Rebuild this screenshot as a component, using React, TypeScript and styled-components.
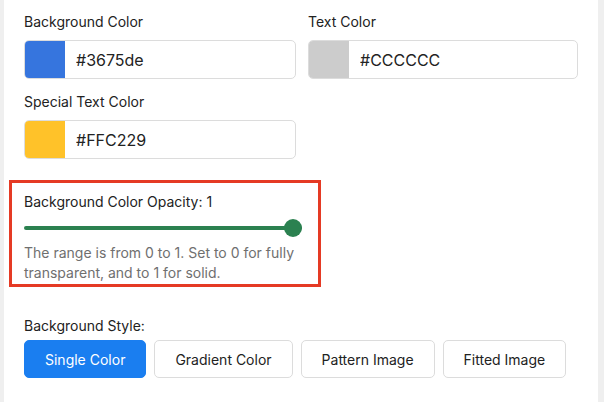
import React, { useState } from 'react';
import styled, { createGlobalStyle } from 'styled-components';

const GlobalStyle = createGlobalStyle`
  html, body {
    margin: 0;
    padding: 0;
    background: #efefef;
  }
  body {
    font-family: Inter, "Noto Sans", "Liberation Sans", sans-serif;
    color: #222;
    -webkit-font-smoothing: antialiased;
  }
`;

const Panel = styled.div`
  margin: 0 6px 0 4px;
  min-height: 402px;
  background: #fff;
  padding: 12px 14px 0 20px;
  box-sizing: border-box;
`;

const ColorGrid = styled.div`
  display: grid;
  grid-template-columns: 272px 270px;
  column-gap: 12px;
  row-gap: 13px;
`;

const Field = styled.div`
  display: flex;
  flex-direction: column;
`;

const Label = styled.label<{ $gap?: number }>`
  font-size: 14px;
  line-height: 20px;
  color: #222;
  margin-bottom: ${p => p.$gap ?? 8}px;
`;

const ColorInput = styled.div`
  display: flex;
  height: 39px;
  box-sizing: border-box;
  border: 1px solid #dcdcdc;
  border-radius: 5px;
  overflow: hidden;
`;

const Swatch = styled.div<{ $color: string }>`
  width: 40px;
  flex: none;
  background: ${p => p.$color};
`;

const HexText = styled.input`
  flex: 1;
  min-width: 0;
  border: none;
  outline: none;
  padding: 0 11px;
  font-family: inherit;
  font-size: 16px;
  color: #222;
  background: transparent;
`;

const Highlight = styled.div`
  margin: 21px 0 0 -15px;
  width: 312px;
  box-sizing: border-box;
  border: 3px solid #e53a24;
  padding: 9px 12px 1px 12px;
`;

const OpacityLabel = styled.div`
  font-size: 14px;
  line-height: 20px;
  color: #222;
`;

const Range = styled.input`
  -webkit-appearance: none;
  appearance: none;
  display: block;
  width: 278px;
  height: 18px;
  margin: 7px 0 6px;
  background: transparent;

  &::-webkit-slider-runnable-track {
    height: 4px;
    border-radius: 2px;
    background: #2b8150;
  }
  &::-webkit-slider-thumb {
    -webkit-appearance: none;
    width: 18px;
    height: 18px;
    margin-top: -7px;
    border-radius: 50%;
    background: #2b8150;
    border: none;
  }
`;

const Help = styled.p`
  margin: 0;
  font-size: 14px;
  line-height: 20px;
  color: #6f6f6f;
`;

const StyleSection = styled.div`
  margin-top: 29px;
`;

const ButtonRow = styled.div`
  display: flex;
  gap: 8px;
`;

const StyleButton = styled.button<{ $active?: boolean }>`
  flex: none;
  height: 38px;
  padding: 0 20px;
  border-radius: 5px;
  font-family: inherit;
  font-size: 14px;
  white-space: nowrap;
  cursor: pointer;
  border: 1px solid ${p => (p.$active ? '#1a7ef0' : '#dcdcdc')};
  background: ${p => (p.$active ? '#1a7ef0' : '#fff')};
  color: ${p => (p.$active ? '#fff' : '#222')};
`;

const colors = [
  { label: 'Background Color', value: '#3675de', swatch: '#3675de' },
  { label: 'Text Color', value: '#CCCCCC', swatch: '#cccccc' },
  { label: 'Special Text Color', value: '#FFC229', swatch: '#ffc229' },
];

const styles = ['Single Color', 'Gradient Color', 'Pattern Image', 'Fitted Image'];

export default function App() {
  const [opacity, setOpacity] = useState(1);
  const [bgStyle, setBgStyle] = useState('Single Color');

  return (
    <>
      <GlobalStyle />
      <Panel>
        <ColorGrid>
          {colors.map(c => (
            <Field key={c.label}>
              <Label>{c.label}</Label>
              <ColorInput>
                <Swatch $color={c.swatch} />
                <HexText defaultValue={c.value} />
              </ColorInput>
            </Field>
          ))}
        </ColorGrid>
        <Highlight>
          <OpacityLabel>Background Color Opacity: {opacity}</OpacityLabel>
          <Range
            type="range"
            min={0}
            max={1}
            step={0.1}
            value={opacity}
            onChange={e => setOpacity(Number(e.target.value))}
          />
          <Help>
            The range is from 0 to 1. Set to 0 for fully transparent, and to 1 for solid.
          </Help>
        </Highlight>
        <StyleSection>
          <Label as="div" $gap={4}>Background Style:</Label>
          <ButtonRow>
            {styles.map(s => (
              <StyleButton key={s} $active={s === bgStyle} onClick={() => setBgStyle(s)}>
                {s}
              </StyleButton>
            ))}
          </ButtonRow>
        </StyleSection>
      </Panel>
    </>
  );
}
